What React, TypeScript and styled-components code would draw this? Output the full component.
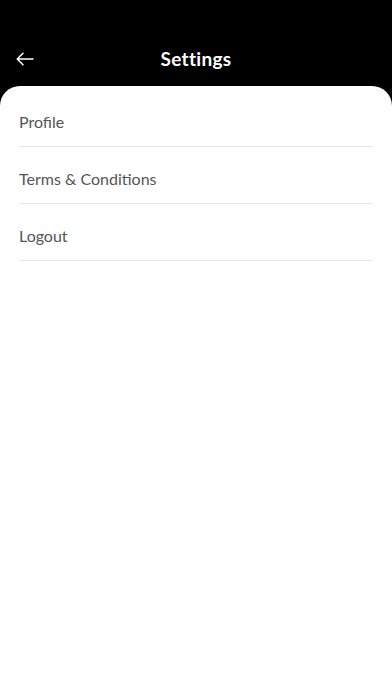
import styled, { createGlobalStyle } from "styled-components";

const GlobalStyle = createGlobalStyle`
  html, body {
    margin: 0;
    padding: 0;
    background: #000;
  }
  body {
    font-family: Lato, "Noto Sans", sans-serif;
  }
`;

const Screen = styled.div`
  width: 392px;
  height: 696px;
  background: #000;
  display: flex;
  flex-direction: column;
  overflow: hidden;
`;

const TopBar = styled.header`
  height: 86px;
  flex-shrink: 0;
  display: grid;
  grid-template-columns: 60px 1fr 60px;
  align-items: center;
  padding-top: 31px;
  box-sizing: border-box;
`;

const BackButton = styled.button`
  background: none;
  border: none;
  padding: 0 0 0 16px;
  display: flex;
  align-items: center;
  cursor: pointer;
`;

const Title = styled.h1`
  margin: 0;
  color: #fff;
  font-size: 19px;
  font-weight: 700;
  letter-spacing: 0.3px;
  text-align: center;
`;

const Sheet = styled.main`
  flex: 1;
  background: #fff;
  border-radius: 20px 20px 0 0;
  padding: 4px 19px 0;
`;

const Row = styled.div`
  height: 57px;
  display: flex;
  align-items: center;
  border-bottom: 1px solid #e6e6e6;
  font-size: 16px;
  font-weight: 400;
  color: #555;
  padding-top: 7px;
  box-sizing: border-box;
`;

const items = ["Profile", "Terms & Conditions", "Logout"];

function App() {
  return (
    <Screen>
      <GlobalStyle />
      <TopBar>
        <BackButton aria-label="Back">
          <svg width="18" height="14" viewBox="0 0 18 14" fill="none">
            <path
              d="M17 7H1.2M7 1.2L1.2 7 7 12.8"
              stroke="#fff"
              strokeWidth="1.5"
              strokeLinecap="round"
              strokeLinejoin="round"
            />
          </svg>
        </BackButton>
        <Title>Settings</Title>
        <div />
      </TopBar>
      <Sheet>
        {items.map((label) => (
          <Row key={label}>{label}</Row>
        ))}
      </Sheet>
    </Screen>
  );
}

export default App;
